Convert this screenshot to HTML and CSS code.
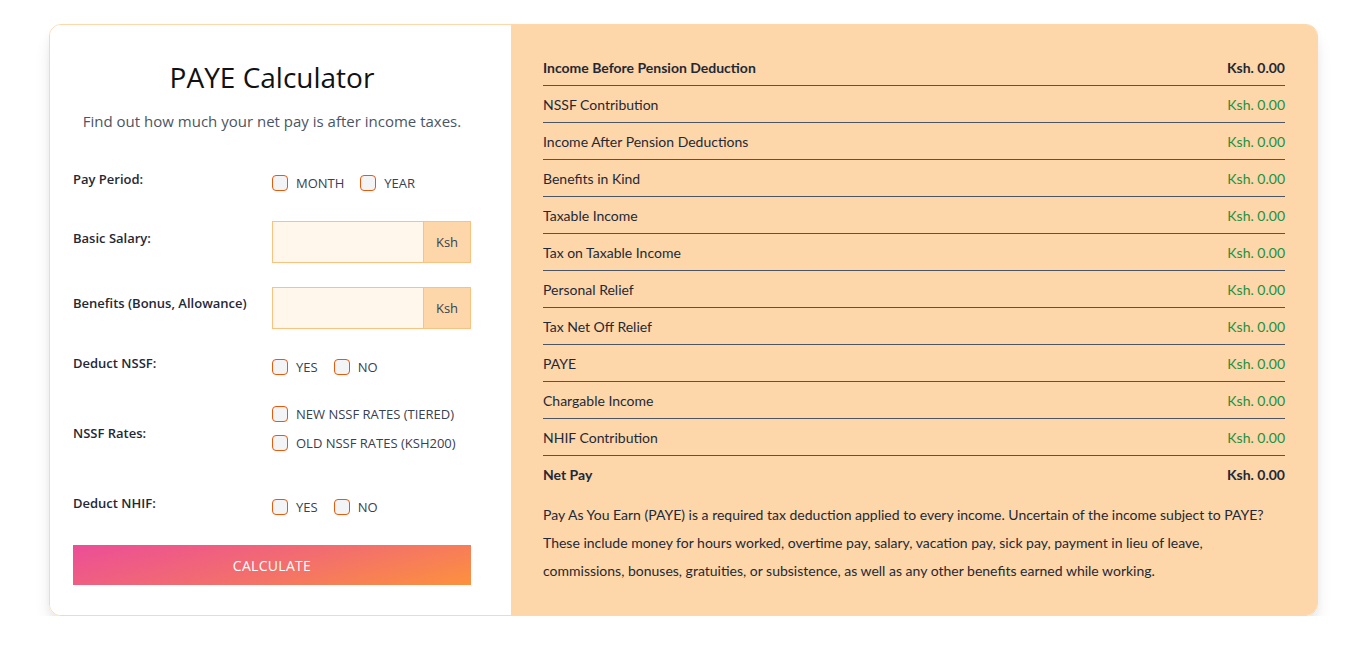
FILE: index.html
```html
<!DOCTYPE html>
<html lang="en">
<head>
<meta charset="utf-8">
<title>PAYE Calculator</title>
<link rel="stylesheet" href="styles.css">
</head>
<body>
<div class="card">
  <section class="left">
    <h1 class="title">PAYE Calculator</h1>
    <p class="subtitle">Find out how much your net pay is after income taxes.</p>
    <div class="form">
      <div class="row row-period">
        <span class="label">Pay Period:</span>
        <div class="opts inline">
          <label class="opt"><span class="box"></span>MONTH</label>
          <label class="opt"><span class="box"></span>YEAR</label>
        </div>
      </div>
      <div class="row row-input">
        <span class="label">Basic Salary:</span>
        <div class="field"><span class="input"></span><span class="addon">Ksh</span></div>
      </div>
      <div class="row row-input row-benefits">
        <span class="label">Benefits (Bonus, Allowance)</span>
        <div class="field"><span class="input"></span><span class="addon">Ksh</span></div>
      </div>
      <div class="row row-nssf">
        <span class="label">Deduct NSSF:</span>
        <div class="opts inline">
          <label class="opt"><span class="box"></span>YES</label>
          <label class="opt"><span class="box"></span>NO</label>
        </div>
      </div>
      <div class="row row-rates">
        <span class="label">NSSF Rates:</span>
        <div class="opts stack">
          <label class="opt"><span class="box"></span>NEW NSSF RATES (TIERED)</label>
          <label class="opt"><span class="box"></span>OLD NSSF RATES (KSH200)</label>
        </div>
      </div>
      <div class="row row-nhif">
        <span class="label">Deduct NHIF:</span>
        <div class="opts inline">
          <label class="opt"><span class="box"></span>YES</label>
          <label class="opt"><span class="box"></span>NO</label>
        </div>
      </div>
    </div>
    <button class="calc">CALCULATE</button>
  </section>
  <section class="right">
    <ul class="results">
      <li class="strong"><span>Income Before Pension Deduction</span><span>Ksh. 0.00</span></li>
      <li><span>NSSF Contribution</span><span class="val">Ksh. 0.00</span></li>
      <li><span>Income After Pension Deductions</span><span class="val">Ksh. 0.00</span></li>
      <li><span>Benefits in Kind</span><span class="val">Ksh. 0.00</span></li>
      <li><span>Taxable Income</span><span class="val">Ksh. 0.00</span></li>
      <li><span>Tax on Taxable Income</span><span class="val">Ksh. 0.00</span></li>
      <li><span>Personal Relief</span><span class="val">Ksh. 0.00</span></li>
      <li><span>Tax Net Off Relief</span><span class="val">Ksh. 0.00</span></li>
      <li><span>PAYE</span><span class="val">Ksh. 0.00</span></li>
      <li><span>Chargable Income</span><span class="val">Ksh. 0.00</span></li>
      <li><span>NHIF Contribution</span><span class="val">Ksh. 0.00</span></li>
      <li class="strong last"><span>Net Pay</span><span>Ksh. 0.00</span></li>
    </ul>
    <p class="info">Pay As You Earn (PAYE) is a required tax deduction applied to every income. Uncertain of the income subject to PAYE? These include money for hours worked, overtime pay, salary, vacation pay, sick pay, payment in lieu of leave, commissions, bonuses, gratuities, or subsistence, as well as any other benefits earned while working.</p>
  </section>
</div>
</body>
</html>
```

FILE: styles.css
```css
* { box-sizing: border-box; }
html, body { margin: 0; padding: 0; background: #ffffff; }
body { font-family: "Open Sans", "Noto Sans", sans-serif; color: #1f2937; }

.card {
  width: 1269px;
  margin: 24px 0 0 49px;
  display: flex;
  border: 1px solid #fdd8ab;
  border-radius: 12px;
  overflow: hidden;
  box-shadow: 0 12px 20px -6px rgba(0,0,0,0.16), 0 4px 12px -4px rgba(0,0,0,0.08);
}

.left {
  width: 461px;
  flex: none;
  background: #ffffff;
  padding: 34px 40px 0 23px;
}
.title {
  margin: 0;
  text-align: center;
  font-size: 28px;
  line-height: 36px;
  font-weight: 400;
  color: #111111;
}
.subtitle {
  margin: 14px 0 0;
  text-align: center;
  font-size: 15px;
  line-height: 24px;
  color: #4b5563;
}
.form { margin-top: 36px; }
.row {
  display: grid;
  grid-template-columns: 199px 199px;
  align-items: start;
}
.label {
  font-size: 13px;
  line-height: 20px;
  font-weight: 600;
  color: #1f2937;
}
.opts.inline { display: flex; gap: 16px; margin-top: 4px; }
.opts.stack { display: flex; flex-direction: column; gap: 9px; }
.opt {
  display: flex;
  align-items: center;
  gap: 8px;
  font-size: 13px;
  line-height: 20px;
  color: #374151;
}
.box {
  width: 16px;
  height: 16px;
  border: 1px solid #ea580c;
  border-radius: 4px;
  background: #f3f4f6;
  flex: none;
}
.row-period { height: 24px; }
.row-input { margin-top: 28px; }
.row-input .label { margin-top: 7px; }
.row-benefits { margin-top: 24px; }
.row-benefits .label { margin-top: 6px; }
.row-nssf { margin-top: 24px; }
.row-rates { margin-top: 27px; align-items: center; }
.row-rates .label { margin-top: 9px; }
.row-nhif { margin-top: 40px; }

.field {
  display: flex;
  height: 42px;
  border: 1px solid #fcc07f;
  background: #fff6ec;
}
.input { flex: 1; }
.addon {
  width: 47px;
  display: flex;
  align-items: center;
  justify-content: center;
  background: #fdd6a9;
  border-left: 1px solid #fcc07f;
  font-size: 13px;
  color: #374151;
}

.calc {
  display: block;
  width: 398px;
  height: 40px;
  margin-top: 28px;
  border: 0;
  padding: 0;
  background: linear-gradient(165deg, #ec4d98 0%, #f26d6f 50%, #fd913d 100%);
  color: #ffffff;
  font-family: inherit;
  font-size: 14px;
  letter-spacing: 0.3px;
}

.right {
  flex: 1;
  background: #fdd6a9;
  padding: 24px 32px 30px 32px;
  font-family: "Lato", "Open Sans", sans-serif;
}
.results { list-style: none; margin: 0; padding: 0; }
.results li {
  display: flex;
  justify-content: space-between;
  align-items: center;
  height: 37px;
  border-bottom: 1px solid #4b5563;
  font-size: 14px;
  color: #1f2937;
}
.results li.last { border-bottom: 0; height: 36px; }
.results li.strong { font-weight: 700; }
.results .val { color: #21913f; }
.info {
  margin: 9px 0 0;
  font-size: 14px;
  line-height: 28px;
  color: #1f2937;
}
```
